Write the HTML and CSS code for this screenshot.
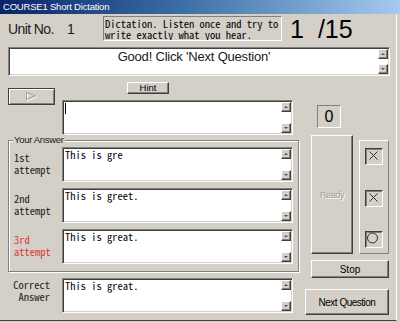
FILE: index.html
```html
<!DOCTYPE html>
<html>
<head>
<meta charset="utf-8">
<link rel="stylesheet" href="styles.css">
</head>
<body>
<div class="titlebar">COURSE1 Short Dictation</div>
<div class="client">
  <div class="header">
    <span class="unit-label">Unit No.</span>
    <span class="unit-num">1</span>
    <div class="instr"><div class="line">Dictation. Listen once and try to</div><div class="line">write exactly what you hear.</div></div>
    <div class="count"><span>1</span><span class="total">/15</span></div>
  </div>
  <div class="edit msg">
    <div class="msg-text">Good! Click 'Next Question'</div>
    <div class="vscroll"><span class="arrow up"></span><span class="arrow down"></span></div>
  </div>
  <div class="main">
    <div class="left">
      <div class="top-row">
        <button class="btn play"><svg width="11" height="9" viewBox="0 0 11 9"><polygon points="1.5,1.5 10.5,5 1.5,8.5" fill="none" stroke="#ffffff"/><polygon points="0.5,0.5 9.5,4 0.5,7.5" fill="none" stroke="#9c9a94"/></svg></button>
        <div class="top-right">
          <button class="btn hint">Hint</button>
          <div class="edit box">
            <div class="edit-text"><span class="caret"></span></div>
            <div class="vscroll"><span class="arrow up"></span><span class="arrow down"></span></div>
          </div>
        </div>
      </div>
      <div class="group">
        <span class="legend">Your Answer</span>
        <div class="row">
          <div class="label"><div class="line">1st</div><div class="line">attempt</div></div>
          <div class="edit box">
            <div class="edit-text">This is gre</div>
            <div class="vscroll"><span class="arrow up"></span><span class="arrow down"></span></div>
          </div>
        </div>
        <div class="row">
          <div class="label"><div class="line">2nd</div><div class="line">attempt</div></div>
          <div class="edit box">
            <div class="edit-text">This is greet.</div>
            <div class="vscroll"><span class="arrow up"></span><span class="arrow down"></span></div>
          </div>
        </div>
        <div class="row">
          <div class="label red"><div class="line">3rd</div><div class="line">attempt</div></div>
          <div class="edit box">
            <div class="edit-text">This is great.</div>
            <div class="vscroll"><span class="arrow up"></span><span class="arrow down"></span></div>
          </div>
        </div>
      </div>
      <div class="row correct">
        <div class="label correct-label"><div class="line">Correct</div><div class="line">Answer</div></div>
        <div class="edit box">
          <div class="edit-text">This is great.</div>
          <div class="vscroll"><span class="arrow up"></span><span class="arrow down"></span></div>
        </div>
      </div>
    </div>
    <div class="right">
      <div class="score">0</div>
      <div class="mid">
        <button class="btn ready">Ready</button>
        <div class="marks">
          <div class="mark"><svg width="16" height="15" viewBox="0 0 16 15"><path d="M3.5 2.5 L11.5 10.5 M11.5 2.5 L3.5 10.5" stroke="#303030" stroke-width="1" fill="none"/></svg></div>
          <div class="mark"><svg width="16" height="15" viewBox="0 0 16 15"><path d="M3.5 2.5 L11.5 10.5 M11.5 2.5 L3.5 10.5" stroke="#303030" stroke-width="1" fill="none"/></svg></div>
          <div class="mark"><svg width="16" height="15" viewBox="0 0 16 15"><circle cx="6.5" cy="6" r="5" stroke="#303030" stroke-width="1" fill="none"/></svg></div>
        </div>
      </div>
      <button class="btn stop">Stop</button>
      <button class="btn next">Next Question</button>
    </div>
  </div>
</div>
</body>
</html>
```

FILE: styles.css
```css
html, body {
  margin: 0;
  padding: 0;
}
body {
  width: 400px;
  height: 322px;
  overflow: hidden;
  background: #d4d0c8;
  font-family: "Liberation Sans", Arial, sans-serif;
  color: #000;
}
.titlebar {
  height: 14px;
  line-height: 14px;
  padding-left: 3px;
  font-size: 9.5px;
  letter-spacing: -0.2px;
  color: #fff;
  background: linear-gradient(90deg, #0a246a 0%, #3a6ea5 45%, #a6caf0 100%);
}
.client {
  width: 397px;
  height: 307px;
  box-sizing: border-box;
  border-right: 1px solid #fff;
  border-bottom: 1px solid #404040;
}
.header {
  height: 33px;
  box-sizing: border-box;
  padding: 2px 0 0 8px;
  display: flex;
  align-items: flex-start;
}
.unit-label {
  width: 59px;
  font-size: 14px;
  letter-spacing: -0.6px;
  line-height: 16px;
  margin-top: 5px;
  color: #202020;
}
.unit-num {
  width: 36px;
  font-size: 14px;
  line-height: 16px;
  margin-top: 5px;
  color: #202020;
}
.instr {
  width: 179px;
  height: 25px;
  box-sizing: border-box;
  border: 1px solid;
  border-color: #808080 #fff #fff #808080;
  padding: 1px 0 0 1px;
  font-family: "Noto Sans Mono CJK JP", "Liberation Mono", monospace;
  font-size: 10.5px;
  line-height: 11px;
  white-space: nowrap;
  overflow: hidden;
}
.line {
  height: 11px;
}
.label .line {
  height: 12px;
}
.count {
  margin: 1px 0 0 8px;
  font-size: 25px;
  line-height: 24px;
  display: flex;
}
.total {
  margin-left: 14px;
}
.edit {
  display: flex;
  box-sizing: border-box;
  border: 1px solid;
  border-color: #808080 #fff #fff #808080;
  box-shadow: inset 1px 1px 0 #404040, inset -1px -1px 0 #d4d0c8;
  background: #fff;
  padding: 1px;
}
.msg {
  margin: 0 0 0 8px;
  width: 382px;
  height: 29px;
}
.msg-text {
  flex: 1;
  text-align: center;
  font-size: 13px;
  letter-spacing: -0.2px;
  line-height: 14px;
  padding-top: 1px;
  color: #202020;
}
.vscroll {
  width: 10px;
  display: flex;
  flex-direction: column;
  justify-content: space-between;
  background: #fff;
}
.arrow {
  display: block;
  height: 10px;
  box-sizing: border-box;
  border: 1px solid;
  border-color: #fff #404040 #404040 #fff;
  box-shadow: inset -1px -1px 0 #808080;
  background: #d4d0c8;
  position: relative;
}
.arrow::after {
  content: "";
  position: absolute;
  left: 2px;
  width: 0;
  height: 0;
  border-left: 2px solid transparent;
  border-right: 2px solid transparent;
}
.arrow.up::after {
  top: 3px;
  border-bottom: 2px solid #505050;
}
.arrow.down::after {
  top: 3px;
  border-top: 2px solid #505050;
}
.main {
  display: flex;
  margin-top: 5px;
}
.left {
  margin-left: 8px;
  width: 291px;
  display: flex;
  flex-direction: column;
}
.btn {
  display: flex;
  align-items: center;
  justify-content: center;
  box-sizing: border-box;
  margin: 0;
  padding: 0;
  border: 1px solid;
  border-color: #fff #404040 #404040 #fff;
  box-shadow: inset -1px -1px 0 #808080;
  background: #d4d0c8;
  font-family: "Liberation Sans", Arial, sans-serif;
  font-size: 10px;
  color: #000;
}
.top-row {
  display: flex;
  align-items: flex-start;
}
.play {
  width: 47px;
  height: 17px;
  margin-top: 7px;
  border-color: #404040;
  box-shadow: inset 1px 1px 0 #fff, inset -1px -1px 0 #808080;
}
.top-right {
  margin-left: 7px;
  width: 231px;
  display: flex;
  flex-direction: column;
}
.hint {
  margin: 1px 0 0 65px;
  width: 42px;
  height: 12px;
  font-size: 9.5px;
  line-height: 10px;
}
.box {
  width: 231px;
  height: 35px;
  margin-top: 0;
}
.top-right .box {
  margin-top: 6px;
}
.edit-text {
  flex: 1;
  padding: 0 1px;
  font-family: "Noto Sans Mono CJK JP", "Liberation Mono", monospace;
  font-size: 10.5px;
  line-height: 12px;
  white-space: pre;
}
.caret {
  display: inline-block;
  width: 1px;
  height: 11px;
  margin-top: 1px;
  background: #000;
  vertical-align: top;
}
.group {
  position: relative;
  margin-top: 5px;
  height: 132px;
  box-sizing: border-box;
  border: 1px solid #808080;
  box-shadow: 1px 1px 0 #fff, inset 1px 1px 0 #fff;
  padding: 6px 5px 8px 0;
  display: flex;
  flex-direction: column;
  gap: 6px;
}
.legend {
  position: absolute;
  top: -7px;
  left: 4px;
  padding: 0 1px;
  background: #d4d0c8;
  font-size: 9.5px;
  letter-spacing: -0.3px;
  line-height: 12px;
  color: #202020;
}
.row {
  display: flex;
}
.label {
  width: 53px;
  box-sizing: border-box;
  padding: 5px 0 0 5px;
  font-family: "Noto Sans Mono CJK JP", "Liberation Mono", monospace;
  font-size: 10.5px;
  line-height: 12px;
  color: #202020;
}
.label.red {
  color: #d83a3a;
}
.correct {
  margin-top: 6px;
}
.correct-label {
  width: 54px;
  padding: 1px 12px 0 0;
  text-align: right;
}
.right {
  margin-left: 6px;
  width: 84px;
  display: flex;
  flex-direction: column;
}
.score {
  margin: 24px 0 0 12px;
  width: 24px;
  height: 23px;
  box-sizing: border-box;
  border: 1px solid;
  border-color: #808080 #fff #fff #808080;
  font-size: 16px;
  line-height: 21px;
  text-align: center;
}
.mid {
  display: flex;
  margin: 7px 0 0 6px;
  align-items: flex-start;
}
.ready {
  width: 42px;
  height: 119px;
  font-size: 9px;
  letter-spacing: -0.4px;
  color: #a09c94;
  text-shadow: 1px 1px 0 #fff;
}
.marks {
  margin: 5px 0 0 6px;
  width: 30px;
  height: 114px;
  box-sizing: border-box;
  border: 1px solid;
  border-color: #fff #808080 #808080 #fff;
  padding: 7px 0 5px 5px;
  display: flex;
  flex-direction: column;
  justify-content: space-between;
}
.mark {
  width: 18px;
  height: 17px;
  box-sizing: border-box;
  border: 1px solid;
  border-color: #404040 #fff #fff #404040;
  box-shadow: inset 1px 1px 0 #808080;
}
.mark svg {
  display: block;
}
.stop {
  margin: 6px 0 0 6px;
  width: 78px;
  height: 18px;
}
.next {
  margin-top: 11px;
  width: 84px;
  height: 26px;
  letter-spacing: -0.5px;
}
```
